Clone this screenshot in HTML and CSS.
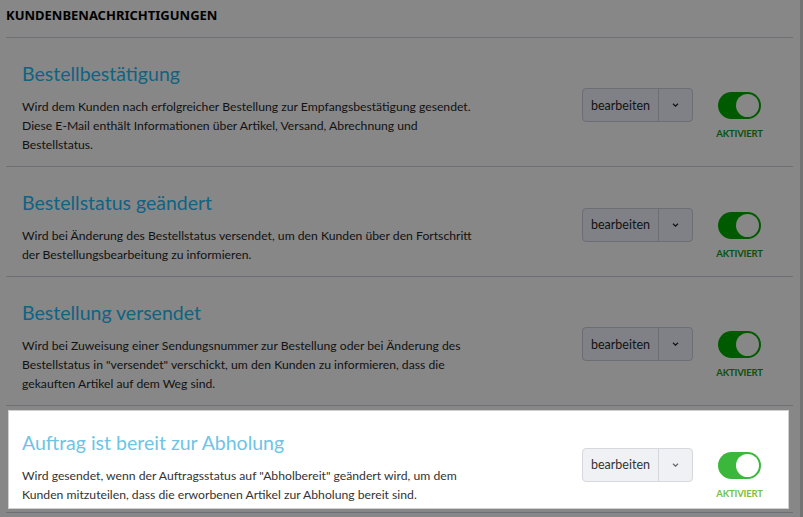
FILE: index.html
```html
<!DOCTYPE html>
<html lang="de">
  <head>
    <meta charset="UTF-8" />
    <meta name="viewport" content="width=device-width, initial-scale=1.0" />
    <title>Kundenbenachrichtigungen</title>
    <link rel="stylesheet" href="styles.css">
  </head>
  <body>
    <div class="page">
      <h2 class="page-title">KUNDENBENACHRICHTIGUNGEN</h2>

      <ul class="notifications">
        <li class="notification">
          <div class="notification-body">
            <div class="notification-text">
              <h3 class="notification-name">Bestellbestätigung</h3>
              <p class="notification-desc">Wird dem Kunden nach erfolgreicher Bestellung zur Empfangsbestätigung gesendet. Diese E-Mail enthält Informationen über Artikel, Versand, Abrechnung und Bestellstatus.</p>
            </div>
            <div class="notification-controls">
              <div class="split-button">
                <button class="split-main">bearbeiten</button>
                <button class="split-caret"><svg width="7" height="4" viewBox="0 0 7 4"><path d="M1 .8l2.5 2.4L6 .8" fill="none" stroke="currentColor" stroke-width="1.2"/></svg></button>
              </div>
              <div class="switch-wrap">
                <span class="switch"><span class="switch-knob"></span></span>
                <span class="switch-label">AKTIVIERT</span>
              </div>
            </div>
          </div>
        </li>

        <li class="notification">
          <div class="notification-body">
            <div class="notification-text">
              <h3 class="notification-name">Bestellstatus geändert</h3>
              <p class="notification-desc">Wird bei Änderung des Bestellstatus versendet, um den Kunden über den Fortschritt der Bestellungsbearbeitung zu informieren.</p>
            </div>
            <div class="notification-controls">
              <div class="split-button">
                <button class="split-main">bearbeiten</button>
                <button class="split-caret"><svg width="7" height="4" viewBox="0 0 7 4"><path d="M1 .8l2.5 2.4L6 .8" fill="none" stroke="currentColor" stroke-width="1.2"/></svg></button>
              </div>
              <div class="switch-wrap">
                <span class="switch"><span class="switch-knob"></span></span>
                <span class="switch-label">AKTIVIERT</span>
              </div>
            </div>
          </div>
        </li>

        <li class="notification">
          <div class="notification-body">
            <div class="notification-text">
              <h3 class="notification-name">Bestellung versendet</h3>
              <p class="notification-desc">Wird bei Zuweisung einer Sendungsnummer zur Bestellung oder bei Änderung des Bestellstatus in "versendet" verschickt, um den Kunden zu informieren, dass die gekauften Artikel auf dem Weg sind.</p>
            </div>
            <div class="notification-controls">
              <div class="split-button">
                <button class="split-main">bearbeiten</button>
                <button class="split-caret"><svg width="7" height="4" viewBox="0 0 7 4"><path d="M1 .8l2.5 2.4L6 .8" fill="none" stroke="currentColor" stroke-width="1.2"/></svg></button>
              </div>
              <div class="switch-wrap">
                <span class="switch"><span class="switch-knob"></span></span>
                <span class="switch-label">AKTIVIERT</span>
              </div>
            </div>
          </div>
        </li>

        <li class="notification is-focused">
          <div class="notification-body">
            <div class="notification-text">
              <h3 class="notification-name">Auftrag ist bereit zur Abholung</h3>
              <p class="notification-desc">Wird gesendet, wenn der Auftragsstatus auf "Abholbereit" geändert wird, um dem Kunden mitzuteilen, dass die erworbenen Artikel zur Abholung bereit sind.</p>
            </div>
            <div class="notification-controls">
              <div class="split-button">
                <button class="split-main">bearbeiten</button>
                <button class="split-caret"><svg width="7" height="4" viewBox="0 0 7 4"><path d="M1 .8l2.5 2.4L6 .8" fill="none" stroke="currentColor" stroke-width="1.2"/></svg></button>
              </div>
              <div class="switch-wrap">
                <span class="switch"><span class="switch-knob"></span></span>
                <span class="switch-label">AKTIVIERT</span>
              </div>
            </div>
          </div>
        </li>
      </ul>
    </div>
  </body>
</html>
```

FILE: styles.css
```css
body {
  margin: 0;
  min-height: 100vh;
  font-family: Lato, "Noto Sans", sans-serif;
  background-color: #878787;
  box-shadow: inset -3px 0 #737373;
}

.page {
  margin-left: 6px;
  width: 787px;
}

.page-title {
  margin: 0;
  padding: 6px 0 13px;
  font-family: "Noto Sans", sans-serif;
  font-size: 13px;
  line-height: 18px;
  font-weight: 700;
  color: #000;
  border-bottom: 1px solid #6d7075;
}

.notifications {
  list-style: none;
  margin: 0;
  padding: 0;
}

.notification {
  border-bottom: 1px solid #6d7075;
}

.notification-body {
  display: flex;
  align-items: center;
  padding: 24px 32px 12px 16px;
}

.notification-text {
  flex: 1;
}

.notification-name {
  margin: 0 0 11px;
  font-size: 19.5px;
  line-height: 24px;
  font-weight: 400;
  color: #0f6383;
}

.notification-desc {
  max-width: 456px;
  margin: 0;
  font-size: 12.2px;
  line-height: 19px;
  color: #121212;
}

.notification-controls {
  display: flex;
  align-items: flex-start;
  gap: 25px;
  margin-top: 13px;
}

.split-button {
  display: flex;
  height: 34px;
  border: 1px solid #6b6e73;
  border-radius: 4px;
  background-color: #7f8187;
  box-sizing: border-box;
}

.split-button button {
  border: 0;
  background: none;
  font-family: inherit;
  color: #111;
  padding: 0;
  cursor: pointer;
}

.split-main {
  width: 76px;
  font-size: 12.5px;
  border-right: 1px solid #6b6e73 !important;
}

.split-caret {
  width: 33px;
  display: flex;
  align-items: center;
  justify-content: center;
}

.switch-wrap {
  display: flex;
  flex-direction: column;
  align-items: center;
  width: 43px;
  padding-top: 4px;
}

.switch {
  display: flex;
  justify-content: flex-end;
  align-items: center;
  width: 43px;
  height: 27px;
  padding: 2px;
  border-radius: 14px;
  background-color: #005b00;
  box-sizing: border-box;
}

.switch-knob {
  width: 23px;
  height: 23px;
  border-radius: 50%;
  background-color: #878787;
}

.switch-label {
  margin-top: 8px;
  font-size: 9.5px;
  line-height: 14px;
  font-weight: 700;
  letter-spacing: -0.2px;
  white-space: nowrap;
  color: #0a520a;
}

.is-focused .notification-body {
  margin: 4px 4px 3px 2px;
  padding: 20px 27px 4px 13px;
  background-color: #fff;
  border: 1px solid #cfcfcf;
}

.is-focused .notification-name {
  color: #6ec4e6;
}

.is-focused .notification-desc {
  color: #333;
}

.is-focused .split-button {
  background-color: #eff1f4;
  border-color: #d5d8dd;
}

.is-focused .split-button button {
  color: #333;
}

.is-focused .split-main {
  border-right-color: #d5d8dd !important;
}

.is-focused .split-caret {
  color: #666 !important;
}

.is-focused .switch {
  background-color: #3bb83b;
}

.is-focused .switch-knob {
  background-color: #fff;
}

.is-focused .switch-label {
  color: #76c043;
}
```
